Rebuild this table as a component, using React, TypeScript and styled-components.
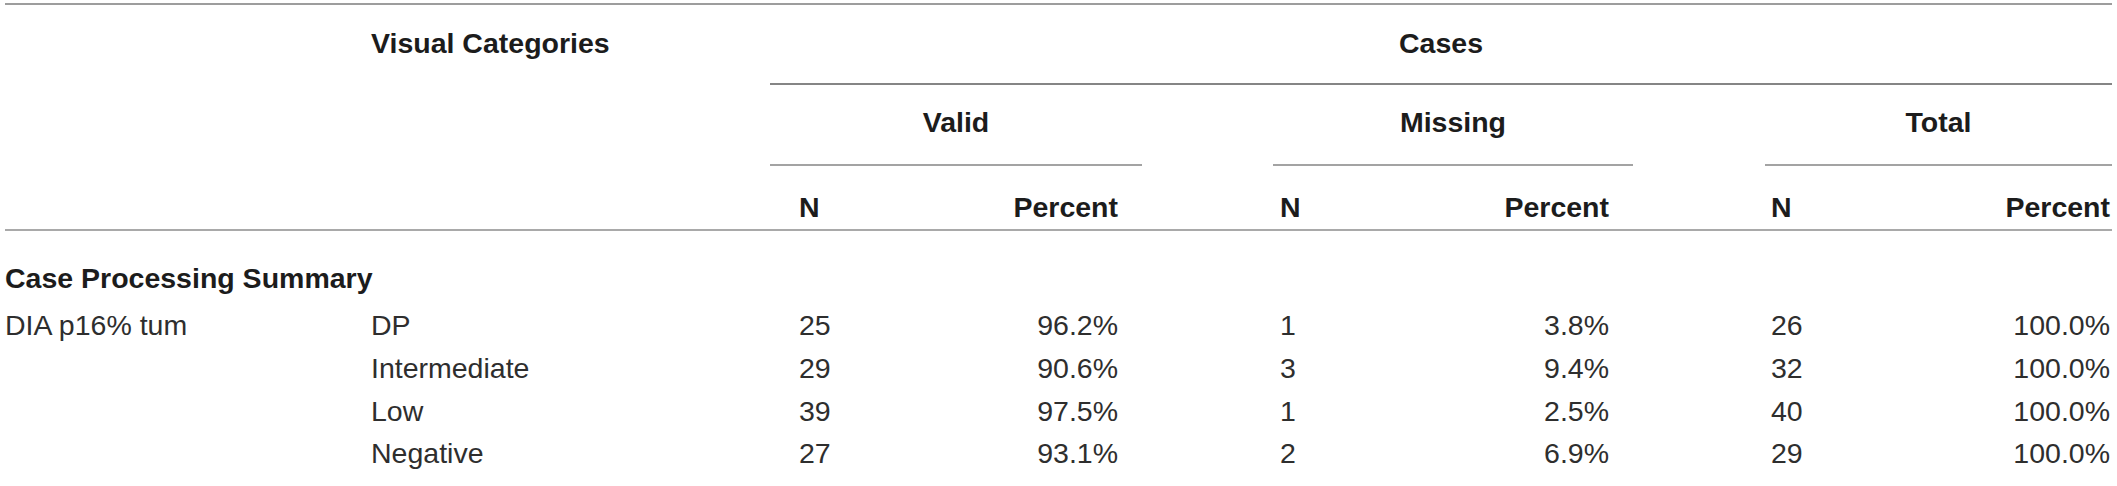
import React from "react";
import styled, { createGlobalStyle } from "styled-components";

const TEMPLATE = "366px 399px 372px 131px 360px 132px 347px";

const GlobalStyle = createGlobalStyle`
  html, body {
    margin: 0;
    padding: 0;
    background: #ffffff;
  }
  body {
    font-family: "Liberation Sans", Arial, Helvetica, sans-serif;
    color: #2a2a2a;
  }
`;

const Table = styled.div`
  margin: 3px 0 0 5px;
  width: 2107px;
  border-top: 2px solid #9d9d9d;
`;

const Head = styled.div`
  border-bottom: 2px solid #a9a9a9;
`;

const Row = styled.div<{ $pt: number; $pb: number }>`
  display: grid;
  grid-template-columns: ${TEMPLATE};
  & > * {
    padding-top: ${(p) => p.$pt}px;
    padding-bottom: ${(p) => p.$pb}px;
  }
`;

const Cell = styled.div<{
  $col: string;
  $center?: boolean;
  $bold?: boolean;
  $rule?: "dark" | "light";
}>`
  grid-column: ${(p) => p.$col};
  display: flex;
  justify-content: ${(p) => (p.$center ? "center" : "flex-start")};
  align-items: flex-start;
  white-space: nowrap;
  font-size: 28.5px;
  line-height: 38px;
  font-weight: ${(p) => (p.$bold ? 700 : 400)};
  color: ${(p) => (p.$bold ? "#1c1c1c" : "#2e2e2e")};
  border-bottom: ${(p) =>
    p.$rule === "dark"
      ? "2px solid #858585"
      : p.$rule === "light"
      ? "2px solid #a3a3a3"
      : "none"};
`;

const Pair = styled.div<{ $col: number; $pl: number; $pr: number; $bold?: boolean }>`
  grid-column: ${(p) => p.$col};
  display: flex;
  justify-content: space-between;
  align-items: flex-start;
  padding-left: ${(p) => p.$pl}px;
  padding-right: ${(p) => p.$pr}px;
  white-space: nowrap;
  font-size: 28.5px;
  line-height: 38px;
  font-weight: ${(p) => (p.$bold ? 700 : 400)};
  color: ${(p) => (p.$bold ? "#1c1c1c" : "#2e2e2e")};
`;

type DataRow = { cat: string; vals: [string, string][] };

const rows: DataRow[] = [
  { cat: "DP", vals: [["25", "96.2%"], ["1", "3.8%"], ["26", "100.0%"]] },
  { cat: "Intermediate", vals: [["29", "90.6%"], ["3", "9.4%"], ["32", "100.0%"]] },
  { cat: "Low", vals: [["39", "97.5%"], ["1", "2.5%"], ["40", "100.0%"]] },
  { cat: "Negative", vals: [["27", "93.1%"], ["2", "6.9%"], ["29", "100.0%"]] },
];

const groups = [
  { name: "Valid", col: 3, pl: 29, pr: 24 },
  { name: "Missing", col: 5, pl: 7, pr: 24 },
  { name: "Total", col: 7, pl: 6, pr: 2 },
];

export default function App() {
  return (
    <>
      <GlobalStyle />
      <Table>
        <Head>
          <Row $pt={19} $pb={21}>
            <Cell $col="2" $bold>
              Visual Categories
            </Cell>
            <Cell $col="3 / 8" $center $bold $rule="dark">
              Cases
            </Cell>
          </Row>
          <Row $pt={17.5} $pb={23.5}>
            {groups.map((g) => (
              <Cell key={g.name} $col={String(g.col)} $center $bold $rule="light">
                {g.name}
              </Cell>
            ))}
          </Row>
          <Row $pt={21.5} $pb={3.5}>
            {groups.map((g) => (
              <Pair key={g.name} $col={g.col} $pl={g.pl} $pr={g.pr} $bold>
                <span>N</span>
                <span>Percent</span>
              </Pair>
            ))}
          </Row>
        </Head>
        <Row $pt={28} $pb={6.6}>
          <Cell $col="1 / -1" $bold>
            Case Processing Summary
          </Cell>
        </Row>
        {rows.map((r, ri) => (
          <Row key={r.cat} $pt={2.4} $pb={2.4}>
            <Cell $col="1">{ri === 0 ? "DIA p16% tum" : ""}</Cell>
            <Cell $col="2">{r.cat}</Cell>
            {r.vals.map(([n, pct], gi) => (
              <Pair key={gi} $col={groups[gi].col} $pl={groups[gi].pl} $pr={groups[gi].pr}>
                <span>{n}</span>
                <span>{pct}</span>
              </Pair>
            ))}
          </Row>
        ))}
      </Table>
    </>
  );
}
